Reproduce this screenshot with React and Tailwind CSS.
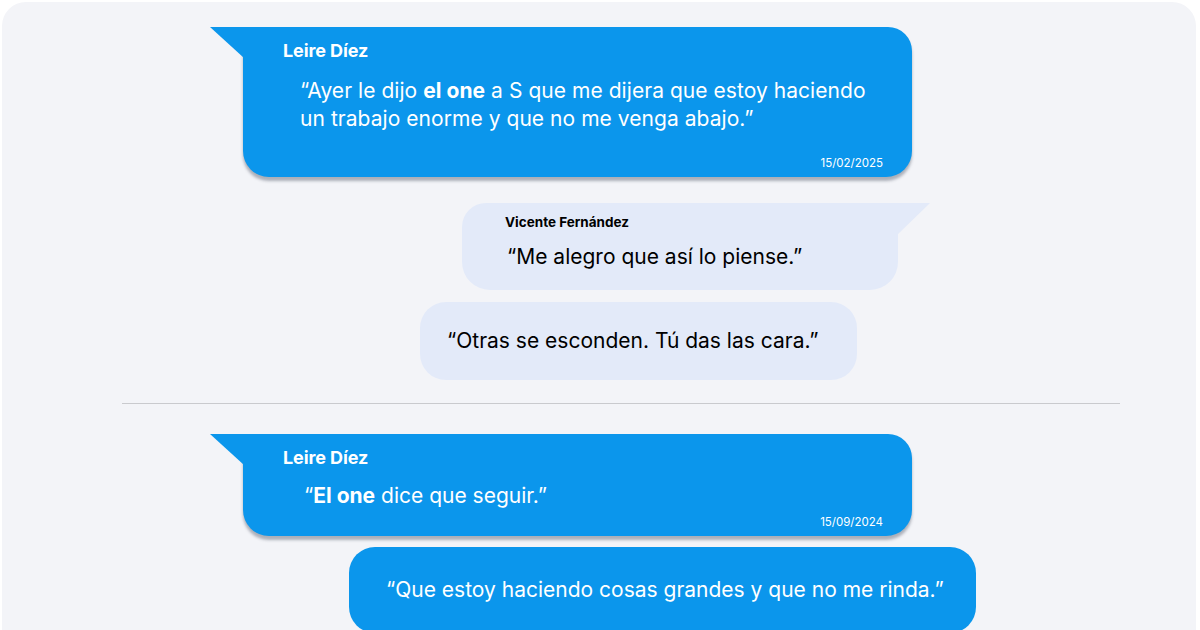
import React from "react";

const BLUE = "#0b96ec";
const LIGHT = "#e3eaf9";

const LeftTail = () => (
  <svg className="absolute left-[-33px] top-0" width="34" height="31" viewBox="0 0 34 31">
    <polygon points="0,0 34,0 34,31" fill={BLUE} />
  </svg>
);

const RightTail = () => (
  <svg className="absolute right-[-32px] top-0" width="33" height="32" viewBox="0 0 33 32">
    <polygon points="0,0 33,0 0,32" fill={LIGHT} />
  </svg>
);

const BlueMessage = ({ name, date, children, className }) => (
  <div
    className={`relative rounded-tr-[24px] rounded-b-[26px] bg-[#0b96ec] text-white shadow-[0_4px_3px_rgba(40,50,70,0.35)] ${className}`}
  >
    <LeftTail />
    <div className="pl-[40px] pt-[12px] text-[18px] font-bold leading-[24px] tracking-[-0.1px]">
      {name}
    </div>
    {children}
    {date && (
      <div className="absolute bottom-[6px] right-[29px] text-[11.5px] leading-[16px]">
        {date}
      </div>
    )}
  </div>
);

const App = () => {
  return (
    <div className="h-[630px] w-[1200px] overflow-hidden bg-white p-[2px] font-['Inter',sans-serif]">
      <div className="flex h-[700px] w-[1194px] flex-col rounded-[24px] bg-[#f3f4f8] pt-[25px]">
        <BlueMessage name="Leire Díez" date="15/02/2025" className="ml-[241px] h-[150px] w-[669px]">
          <div className="pl-[57px] pt-[14px] text-[21px] leading-[28px] tracking-[0.05px]">
            “Ayer le dijo <b className="font-bold">el one</b> a S que me dijera que estoy haciendo
            <br />
            un trabajo enorme y que no me venga abajo.”
          </div>
        </BlueMessage>

        <div className="relative ml-[460px] mt-[26px] h-[87px] w-[436px] rounded-tl-[24px] rounded-bl-[28px] rounded-br-[28px] bg-[#e3eaf9] text-black">
          <RightTail />
          <div className="pl-[43px] pt-[10px] text-[13.5px] font-bold leading-[18px]">Vicente Fernández</div>
          <div className="pl-[45px] pt-[11px] text-[21px] leading-[30px]">“Me alegro que así lo piense.”</div>
        </div>

        <div className="ml-[418px] mt-[12px] flex h-[78px] w-[437px] items-center rounded-[26px] bg-[#e3eaf9] pl-[27px] text-[21px] text-black">
          “Otras se esconden. Tú das las cara.”
        </div>

        <div className="ml-[120px] mt-[23px] h-px w-[998px] bg-[#c9cace]" />

        <BlueMessage name="Leire Díez" date="15/09/2024" className="ml-[241px] mt-[30px] h-[102px] w-[669px]">
          <div className="pl-[61px] pt-[12px] text-[21px] leading-[28px]">
            “<b className="font-bold">El one</b> dice que seguir.”
          </div>
        </BlueMessage>

        <div className="ml-[347px] mt-[11px] flex h-[86px] w-[627px] items-center rounded-[26px] bg-[#0b96ec] pl-[37px] text-[21px] text-white">
          “Que estoy haciendo cosas grandes y que no me rinda.”
        </div>
      </div>
    </div>
  );
};

export default App;
